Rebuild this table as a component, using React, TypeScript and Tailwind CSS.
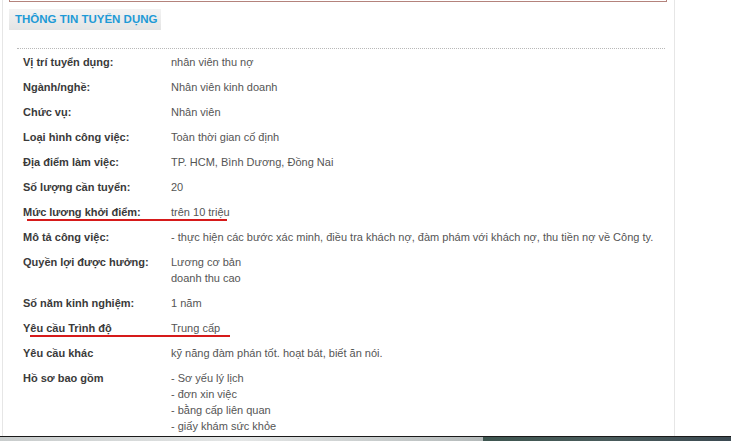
const rows: { label: string; value: string[]; mark?: boolean }[] = [
  { label: 'Vị trí tuyển dụng:', value: ['nhân viên thu nợ'] },
  { label: 'Ngành/nghề:', value: ['Nhân viên kinh doanh'] },
  { label: 'Chức vụ:', value: ['Nhân viên'] },
  { label: 'Loại hình công việc:', value: ['Toàn thời gian cố định'] },
  { label: 'Địa điểm làm việc:', value: ['TP. HCM, Bình Dương, Đồng Nai'] },
  { label: 'Số lượng cần tuyển:', value: ['20'] },
  { label: 'Mức lương khởi điểm:', value: ['trên 10 triệu'], mark: true },
  {
    label: 'Mô tả công việc:',
    value: ['- thực hiện các bước xác minh, điều tra khách nợ, đàm phám với khách nợ, thu tiền nợ về Công ty.'],
  },
  { label: 'Quyền lợi được hưởng:', value: ['Lương cơ bản', 'doanh thu cao'] },
  { label: 'Số năm kinh nghiệm:', value: ['1 năm'] },
  { label: 'Yêu cầu Trình độ', value: ['Trung cấp'], mark: true },
  { label: 'Yêu cầu khác', value: ['kỹ năng đàm phán tốt. hoạt bát, biết ăn nói.'] },
  {
    label: 'Hồ sơ bao gồm',
    value: ['- Sơ yếu lý lịch', '- đơn xin việc', '- bằng cấp liên quan', '- giấy khám sức khỏe'],
  },
];

export default function App() {
  return (
    <div className="w-[731px] h-[441px] bg-white overflow-hidden flex flex-col font-['Liberation_Sans',Arial,sans-serif] text-[11px]">
      <div className="h-[436px] flex overflow-hidden">
        {/* Main panel */}
        <div className="w-[673px] shrink-0 ml-[2px] border-l border-r border-[#e6e6e6] pl-[6px] pr-[6px]">
          {/* Bottom edge of the box above */}
          <div className="h-[2px] w-[658px] border-x border-b border-[#b4837c]" />

          {/* Section title */}
          <div className="mt-[7px] h-[21px] w-[152px] bg-gradient-to-b from-[#f3f3f3] to-[#e4e4e4] pl-[6px] flex items-center">
            <span className="text-[11.5px] font-bold text-[#1e9ad6]">THÔNG TIN TUYỂN DỤNG</span>
          </div>

          {/* Dotted separator */}
          <div className="mt-[18px] ml-[8px] w-[648px] border-t border-dotted border-[#b8b8b8]" />

          {/* Detail rows */}
          <div className="pt-[5px] pl-[14px]">
            {rows.map((row) => (
              <div key={row.label} className="relative flex pb-[9px] leading-[16px]">
                <div className="w-[148px] shrink-0 font-bold text-[#3a3a3a]">{row.label}</div>
                <div className="text-[#555] whitespace-nowrap">
                  {row.value.map((v) => (
                    <div key={v}>{v}</div>
                  ))}
                </div>
                {row.mark && (
                  <div
                    className={
                      row.label.startsWith('Mức')
                        ? 'absolute left-[4px] top-[15px] w-[200px] h-[2px] bg-[#d61a1a]'
                        : 'absolute left-[7px] top-[15px] w-[200px] h-[2px] bg-[#d61a1a]'
                    }
                  />
                )}
              </div>
            ))}
          </div>
        </div>
        <div className="flex-1" />
      </div>

      {/* Taskbar strip */}
      <div className="h-[5px] border-t border-[#1a1a1a] flex">
        <div className="w-[483px] bg-gradient-to-r from-[#c8cccc] via-[#e4e6e6] to-[#b4baba]" />
        <div className="flex-1 bg-gradient-to-r from-[#3e5650] via-[#4a5c5c] to-[#3c4a52]" />
      </div>
    </div>
  );
}
